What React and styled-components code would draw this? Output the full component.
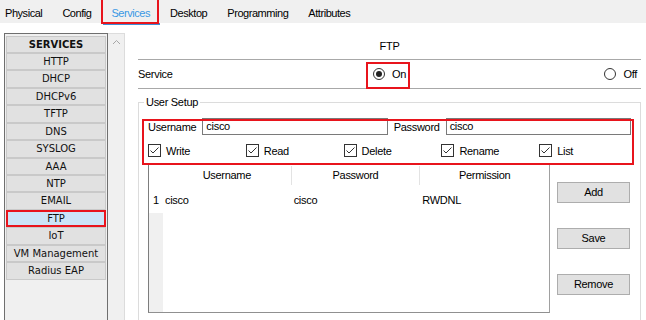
import React from "react";
import styled, { createGlobalStyle, css } from "styled-components";

const Styles = createGlobalStyle`
  html,
  body,
  #root {
    height: 100%;
    margin: 0;
  }

  body {
    background: #fff;
    color: #000;
    font-family: "Liberation Sans", Arial, sans-serif;
    font-size: 11px;
    letter-spacing: -0.3px;
    overflow: hidden;
  }
`;

const Window = styled.div`
  display: flex;
  flex-direction: column;
  height: 320px;
  width: 646px;
`;

const TabBar = styled.div`
  background: #f0f0f0;
  display: flex;
  gap: 20px;
  height: 23px;
  padding-left: 5px;
  box-sizing: border-box;
`;

const Tab = styled.div`
  letter-spacing: -0.45px;
  line-height: 13px;
  padding-top: 7px;
  position: relative;
  white-space: nowrap;

  ${({ active }) =>
    active &&
    css`
      color: #3a98e4;

      &:before {
        background: #3c8fd8;
        bottom: -2px;
        content: "";
        height: 2px;
        left: -8px;
        position: absolute;
        right: -10px;
      }

      &:after {
        border: 2px solid #e8141c;
        bottom: -1px;
        content: "";
        left: -10px;
        position: absolute;
        right: -9px;
        top: -3px;
      }
    `}
`;

const Body = styled.div`
  display: flex;
  flex: 1;
  gap: 13px;
  min-height: 0;
  padding: 10px 5px 0 4px;
`;

const LeftPanel = styled.div`
  display: flex;
  flex-shrink: 0;
`;

const ServiceList = styled.div`
  background: #f0f0f0;
  border: 1px solid #6f6f6f;
  border-bottom: none;
  box-sizing: border-box;
  display: flex;
  flex-direction: column;
  padding: 1px;
  padding-top: 1.5px;
  width: 104px;
`;

const ServiceButton = styled.div`
  background: ${({ active }) => (active ? "#cce4f7" : "#e1e1e1")};
  border: ${({ active }) => (active ? "2px solid #e8141c" : "1px solid #c9c9c9")};
  box-sizing: border-box;
  color: #111;
  font-family: "DejaVu Sans", Tahoma, sans-serif;
  font-size: 10px;
  font-weight: ${({ heading }) => (heading ? "bold" : "normal")};
  height: 17.45px;
  letter-spacing: 0;
  line-height: ${({ active }) => (active ? "13.45px" : "15.45px")};
  text-align: center;
  width: 100px;
`;

const Scrollbar = styled.div`
  background: #f0f0f0;
  border-right: 1px solid #dcdcdc;
  border-top: 1px solid #dcdcdc;
  box-sizing: border-box;
  display: flex;
  justify-content: center;
  padding-top: 5px;
  width: 17px;
`;

const RightPanel = styled.div`
  display: flex;
  flex: 1;
  flex-direction: column;
  min-width: 0;
`;

const Title = styled.div`
  border-bottom: 1px solid #a8a8a8;
  height: 19px;
  line-height: 13px;
  padding-top: 7px;
  text-align: center;
`;

const ServiceRow = styled.div`
  align-items: stretch;
  border-bottom: 1px solid #a8a8a8;
  display: grid;
  grid-template-columns: 1fr auto 1fr;
  height: 28px;
`;

const RowLabel = styled.div`
  align-self: center;
  line-height: 13px;
`;

const RadioItem = styled.label`
  align-items: center;
  display: flex;
  gap: 7px;
  justify-self: ${({ end }) => (end ? "end" : "start")};
  padding-right: ${({ end }) => (end ? "4px" : "0")};
  position: relative;

  ${({ marked }) =>
    marked &&
    css`
      &:after {
        border: 2px solid #e8141c;
        bottom: -1px;
        content: "";
        left: -7px;
        position: absolute;
        right: -4px;
        top: 2px;
      }
    `}
`;

const RadioCircle = styled.span`
  background: #fff;
  border: 1px solid #333;
  border-radius: 50%;
  box-sizing: border-box;
  display: flex;
  align-items: center;
  justify-content: center;
  height: 12px;
  width: 12px;

  &:after {
    background: ${({ checked }) => (checked ? "#222" : "transparent")};
    border-radius: 50%;
    content: "";
    height: 6px;
    width: 6px;
  }
`;

const GroupBox = styled.fieldset`
  border: 1px solid #dcdcdc;
  border-bottom: none;
  display: flex;
  flex: 1;
  flex-direction: column;
  margin: 7px 0 0;
  min-width: 0;
  padding: 0 3px 0 9px;
`;

const Legend = styled.legend`
  line-height: 13px;
  margin-left: -4px;
  padding: 0 2px;
`;

const Highlight = styled.div`
  margin-top: 9px;
  position: relative;

  &:after {
    border: 2px solid #e8141c;
    bottom: -8px;
    content: "";
    left: -6px;
    pointer-events: none;
    position: absolute;
    right: 3px;
    top: 1px;
  }
`;

const InputRow = styled.div`
  align-items: center;
  display: flex;
  height: 17px;
  margin-right: 6px;
`;

const FieldLabel = styled.span`
  margin-right: 6px;
  margin-left: ${({ spaced }) => (spaced ? "6px" : "0")};
  white-space: nowrap;
`;

const TextInput = styled.div`
  border: 1px solid #7a7a7a;
  box-sizing: border-box;
  flex: 1;
  height: 17px;
  line-height: 15px;
  padding-left: 3px;
`;

const CheckRow = styled.div`
  display: grid;
  grid-template-columns: repeat(5, 1fr);
  margin-top: 9px;
`;

const CheckItem = styled.label`
  align-items: center;
  display: flex;
  gap: 5px;
  height: 13px;
`;

const CheckBox = styled.span`
  background: #fff;
  border: 1px solid #333;
  box-sizing: border-box;
  display: block;
  height: 13px;
  width: 13px;

  svg {
    display: block;
  }
`;

const UserArea = styled.div`
  display: flex;
  flex: 1;
  gap: 7px;
  margin-top: 6px;
  min-height: 0;
`;

const Table = styled.div`
  border-bottom: 1px solid #909090;
  border-left: 1px solid #7d7d7d;
  border-right: 1px solid #a0a0a0;
  box-sizing: border-box;
  display: grid;
  grid-template-columns: 14px repeat(3, 1fr);
  grid-template-rows: 24px 26px 1fr;
  height: 150px;
  width: 402px;
`;

const HeadCell = styled.div`
  align-self: center;
  border-right: ${({ divider }) => (divider ? "1px solid #e3e3e3" : "none")};
  line-height: 19px;
  text-align: center;
`;

const Cell = styled.div`
  align-self: center;
  line-height: 13px;
  padding-left: ${({ rowHead }) => (rowHead ? "4px" : "2px")};
`;

const Filler = styled.div`
  background: ${({ gray }) => (gray ? "#f0f0f0" : "#fff")};
  grid-column: ${({ gray }) => (gray ? "1" : "2 / 5")};
`;

const ButtonColumn = styled.div`
  display: flex;
  flex-direction: column;
  gap: 25px;
  padding-top: 19px;
`;

const ActionButton = styled.div`
  background: #e1e1e1;
  border: 1px solid #adadad;
  box-sizing: border-box;
  height: 21px;
  line-height: 19px;
  text-align: center;
  width: 73px;
`;

const Tick = () => (
  <svg width="11" height="11" viewBox="0 0 11 11">
    <path d="M1.5 5.5 L4 8 L9.5 2.5" fill="none" stroke="#333" strokeWidth="1" />
  </svg>
);

const ChevronUp = () => (
  <svg width="9" height="6" viewBox="0 0 9 6">
    <path d="M1 5 L4.5 1.5 L8 5" fill="none" stroke="#a6a6a6" strokeWidth="1" />
  </svg>
);

const tabs = ["Physical", "Config", "Services", "Desktop", "Programming", "Attributes"];

const services = [
  "HTTP",
  "DHCP",
  "DHCPv6",
  "TFTP",
  "DNS",
  "SYSLOG",
  "AAA",
  "NTP",
  "EMAIL",
  "FTP",
  "IoT",
  "VM Management",
  "Radius EAP",
];

const permissions = ["Write", "Read", "Delete", "Rename", "List"];

const App = () => (
  <>
    <Styles />
    <Window>
      <TabBar>
        {tabs.map(tab => (
          <Tab key={tab} active={tab === "Services"}>
            {tab}
          </Tab>
        ))}
      </TabBar>
      <Body>
        <LeftPanel>
          <ServiceList>
            <ServiceButton heading>SERVICES</ServiceButton>
            {services.map(name => (
              <ServiceButton key={name} active={name === "FTP"}>
                {name}
              </ServiceButton>
            ))}
          </ServiceList>
          <Scrollbar>
            <ChevronUp />
          </Scrollbar>
        </LeftPanel>
        <RightPanel>
          <Title>FTP</Title>
          <ServiceRow>
            <RowLabel>Service</RowLabel>
            <RadioItem marked>
              <RadioCircle checked />
              On
            </RadioItem>
            <RadioItem end>
              <RadioCircle />
              Off
            </RadioItem>
          </ServiceRow>
          <GroupBox>
            <Legend>User Setup</Legend>
            <Highlight>
              <InputRow>
                <FieldLabel>Username</FieldLabel>
                <TextInput>cisco</TextInput>
                <FieldLabel spaced>Password</FieldLabel>
                <TextInput>cisco</TextInput>
              </InputRow>
              <CheckRow>
                {permissions.map(p => (
                  <CheckItem key={p}>
                    <CheckBox>
                      <Tick />
                    </CheckBox>
                    {p}
                  </CheckItem>
                ))}
              </CheckRow>
            </Highlight>
            <UserArea>
              <Table>
                <div />
                <HeadCell divider>Username</HeadCell>
                <HeadCell divider>Password</HeadCell>
                <HeadCell>Permission</HeadCell>
                <Cell rowHead>1</Cell>
                <Cell>cisco</Cell>
                <Cell>cisco</Cell>
                <Cell>RWDNL</Cell>
                <Filler gray />
                <Filler />
              </Table>
              <ButtonColumn>
                <ActionButton>Add</ActionButton>
                <ActionButton>Save</ActionButton>
                <ActionButton>Remove</ActionButton>
              </ButtonColumn>
            </UserArea>
          </GroupBox>
        </RightPanel>
      </Body>
    </Window>
  </>
);

export default App;
